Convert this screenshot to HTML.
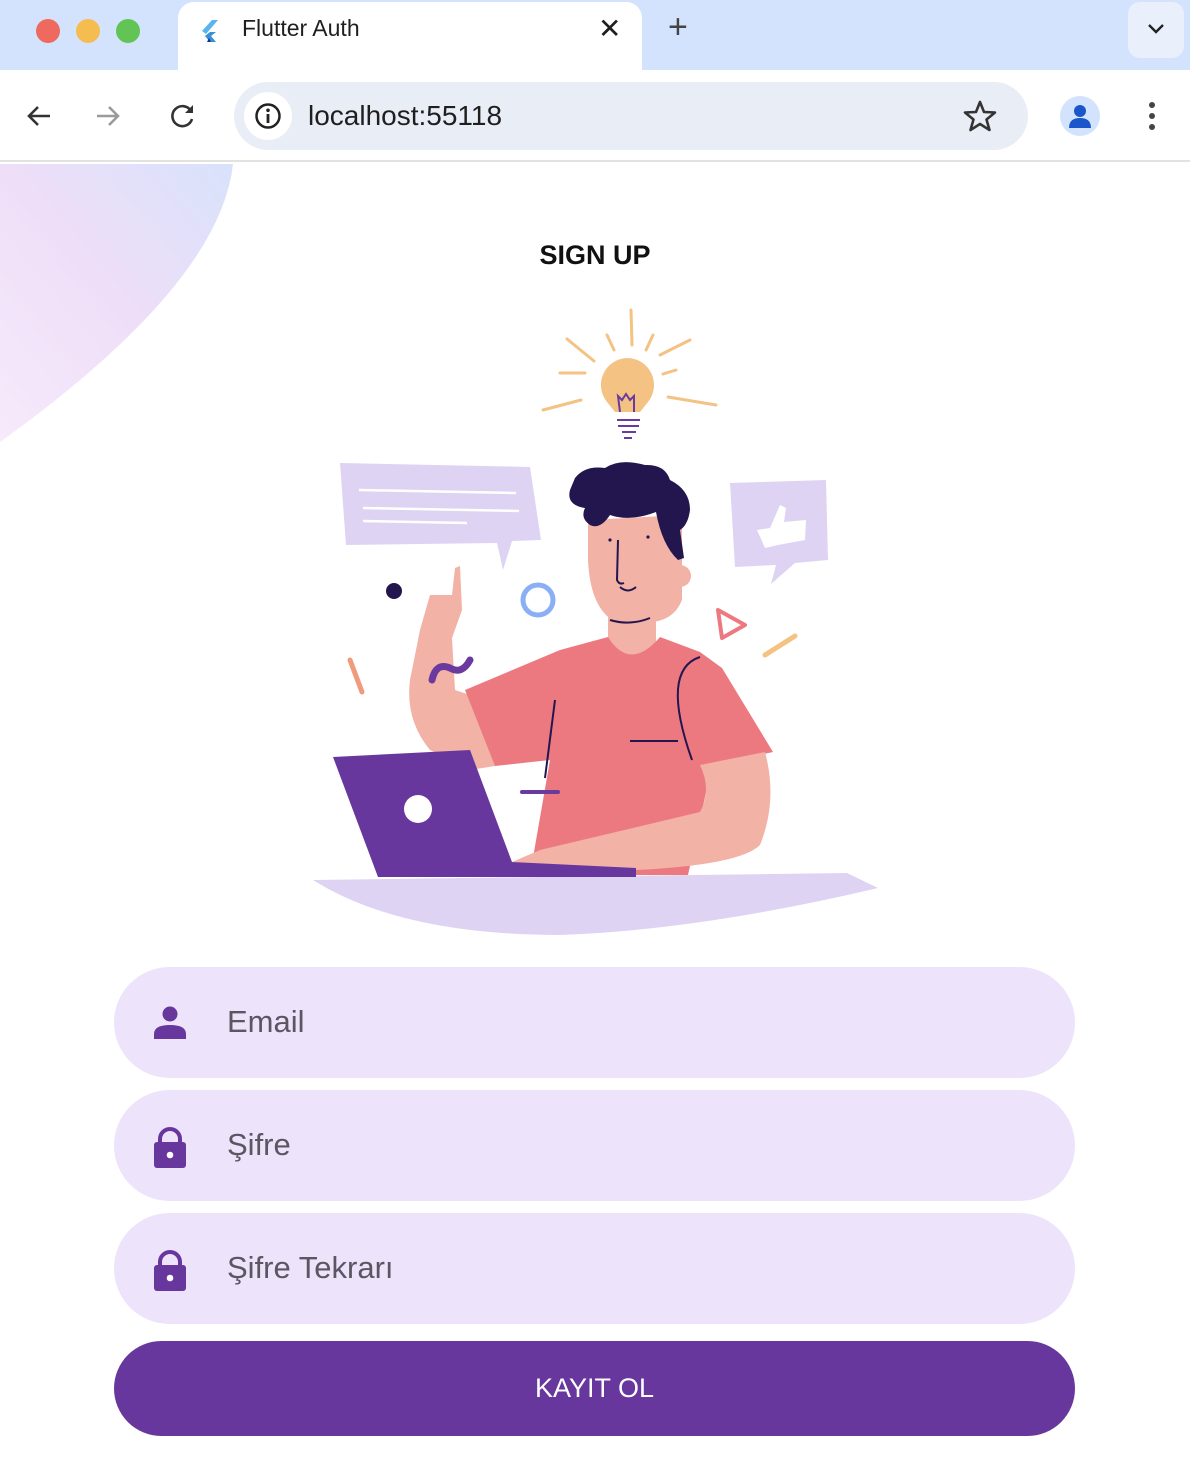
<!DOCTYPE html>
<html><head><meta charset="utf-8"><style>
*{margin:0;padding:0;box-sizing:border-box}
body{width:1190px;height:1474px;overflow:hidden;background:#fff;font-family:"Liberation Sans",sans-serif;position:relative}
.abs{position:absolute}
.field{position:absolute;left:114px;width:961px;height:111px;border-radius:56px;background:#ede3fb}
.field span{position:absolute;left:113px;top:37px;font-size:31px;color:#5b5661}
.field svg{position:absolute;left:38px;top:37px}
</style></head><body>
<!-- tab strip -->
<div class="abs" style="left:0;top:0;width:1190px;height:70px;background:#d3e3fd"></div>
<div class="abs" style="left:36px;top:19px;width:24px;height:24px;border-radius:50%;background:#ee6a5f"></div>
<div class="abs" style="left:76px;top:19px;width:24px;height:24px;border-radius:50%;background:#f5bd4f"></div>
<div class="abs" style="left:116px;top:19px;width:24px;height:24px;border-radius:50%;background:#61c454"></div>
<div class="abs" style="left:178px;top:2px;width:464px;height:70px;background:#fff;border-radius:16px 16px 0 0"></div>
<svg class="abs" style="left:198px;top:18px" width="24" height="26" viewBox="0 0 24 26"><path d="M14 2 L4 13 L8 16 L20 2Z" fill="#5ab4f1"/><path d="M12 14 L7 18 L12 24 L18 24 L13 18 L18 14Z" fill="#3a8fd6"/><path d="M11 20 L13 24 L9 24Z" fill="#0d3a7a"/></svg>
<div class="abs" style="left:242px;top:15px;font-size:23px;color:#1f1f1f">Flutter Auth</div>
<div class="abs" style="left:598px;top:12px;font-size:28px;color:#1f1f1f">✕</div>
<div class="abs" style="left:668px;top:8px;font-size:34px;color:#444;font-weight:300">+</div>
<div class="abs" style="left:1128px;top:2px;width:56px;height:56px;border-radius:12px;background:#e9effb"></div>
<svg class="abs" style="left:1146px;top:22px" width="20" height="14"><path d="M3 3 L10 10 L17 3" stroke="#222" stroke-width="2.4" fill="none"/></svg>
<!-- toolbar -->
<div class="abs" style="left:0;top:70px;width:1190px;height:92px;background:#fff;border-bottom:2px solid #e2e2e2"></div>
<svg class="abs" style="left:24px;top:102px" width="30" height="28"><path d="M26 14 H5 M14 5 L5 14 L14 23" stroke="#333" stroke-width="2.6" fill="none"/></svg>
<svg class="abs" style="left:94px;top:102px" width="30" height="28"><path d="M3 14 H24 M15 5 L24 14 L15 23" stroke="#9a9a9a" stroke-width="2.6" fill="none"/></svg>
<svg class="abs" style="left:168px;top:102px" width="30" height="28"><path d="M23 9 A10 10 0 1 0 24 17" stroke="#333" stroke-width="2.6" fill="none"/><path d="M25 3 V11 H17Z" fill="#333"/></svg>
<div class="abs" style="left:234px;top:82px;width:794px;height:68px;border-radius:34px;background:#e9eef6"></div>
<div class="abs" style="left:244px;top:92px;width:48px;height:48px;border-radius:50%;background:#fff"></div>
<svg class="abs" style="left:254px;top:102px" width="28" height="28"><circle cx="14" cy="14" r="11.5" stroke="#222" stroke-width="2.5" fill="none"/><rect x="12.6" y="12" width="2.8" height="9" fill="#222"/><circle cx="14" cy="8.3" r="1.8" fill="#222"/></svg>
<div class="abs" style="left:308px;top:100px;font-size:28px;color:#1f1f1f">localhost:55118</div>
<svg class="abs" style="left:962px;top:99px" width="36" height="34"><path d="M18 3 L22 13 L33 13.5 L24.5 20.5 L27.5 31 L18 25 L8.5 31 L11.5 20.5 L3 13.5 L14 13Z" stroke="#333" stroke-width="2.6" fill="none" stroke-linejoin="round"/></svg>
<div class="abs" style="left:1060px;top:96px;width:40px;height:40px;border-radius:50%;background:#d3e3fd"></div>
<svg class="abs" style="left:1064px;top:100px" width="32" height="32"><circle cx="16" cy="11" r="6" fill="#1a56c9"/><path d="M5 28 Q5 18 16 18 Q27 18 27 28Z" fill="#1a56c9"/></svg>
<div class="abs" style="left:1149px;top:102px;width:6px;height:6px;border-radius:50%;background:#444"></div>
<div class="abs" style="left:1149px;top:113px;width:6px;height:6px;border-radius:50%;background:#444"></div>
<div class="abs" style="left:1149px;top:124px;width:6px;height:6px;border-radius:50%;background:#444"></div>
<!-- corner blob -->
<svg class="abs" style="left:0;top:164px" width="240" height="280"><defs><linearGradient id="g" x1="0" y1="1" x2="1" y2="0"><stop offset="0" stop-color="#f6eafb"/><stop offset="0.5" stop-color="#efdef8"/><stop offset="1" stop-color="#d8e2fb"/></linearGradient></defs><path d="M0 0 H233 Q220 120 0 278Z" fill="url(#g)"/></svg>
<div class="abs" style="left:0;top:240px;width:1190px;text-align:center;font-size:27px;font-weight:bold;color:#111">SIGN UP</div>
<!-- illustration -->
<svg class="abs" style="left:0;top:0" width="1190" height="960">
<g stroke="#f4c283" stroke-width="3" stroke-linecap="round" fill="none">
<path d="M631 310 L632 345"/><path d="M607 335 L614 350"/><path d="M653 335 L646 350"/><path d="M567 339 L594 361"/><path d="M690 340 L660 355"/><path d="M560 373 L585 373"/><path d="M663 374 L676 370"/><path d="M543 410 L581 400"/><path d="M668 397 L716 405"/>
</g>
<path d="M627 358 A27 27 0 0 1 648 402 L640 412 L615 412 L607 402 A27 27 0 0 1 627 358Z" fill="#f4c283"/>
<g stroke="#6a3a9e" stroke-width="2" fill="none"><path d="M620 412 L618 396 L622 400 L626 394 L630 400 L634 396 L634 412"/><path d="M617 420 H640 M618 426 H639 M622 432 H636 M624 438 H632"/></g>
<path d="M340 463 L530 467 L541 540 L512 541 L503 570 L497 543 L346 545Z" fill="#ded3f3"/>
<g stroke="#fff" stroke-width="2.5"><path d="M359 490 L516 493"/><path d="M363 508 L519 511"/><path d="M363 521 L467 523"/></g>
<path d="M730 483 L826 480 L828 560 L795 563 L771 584 L776 565 L735 567Z" fill="#ded3f3"/>
<path d="M757 530 L770 528 L780 505 L786 508 L784 522 L806 520 L805 540 L778 545 L765 548Z" fill="#fff"/>
<circle cx="394" cy="591" r="8" fill="#23164f"/>
<circle cx="538" cy="600" r="15" stroke="#8aaff5" stroke-width="5" fill="none"/>
<path d="M350 660 L362 692" stroke="#f19a7c" stroke-width="5" stroke-linecap="round"/>
<path d="M718 610 L745 625 L722 638Z" stroke="#ec7980" stroke-width="4" fill="none" stroke-linejoin="round"/>
<path d="M765 655 L795 636" stroke="#f4c283" stroke-width="5" stroke-linecap="round"/>
<path d="M313 880 L847 873 L878 888 Q700 930 560 935 Q400 935 313 880Z" fill="#ded3f3"/>
<!-- raised arm -->
<path d="M430 595 L452 595 L455 568 L460 566 L462 610 L452 638 L455 690 L470 695 L495 766 L470 770 L430 750 Q405 720 410 680 L420 630Z" fill="#f2b2a6"/>
<!-- neck -->
<path d="M608 600 L656 600 L656 650 Q640 672 620 665 Q606 658 608 640Z" fill="#f2b2a6"/>
<!-- shirt -->
<path d="M465 690 L560 650 L608 637 Q630 672 660 637 L700 652 L722 668 L773 752 L712 765 L688 875 L530 875 L550 760 L495 766Z" fill="#ec7980"/>
<g stroke="#23164f" stroke-width="2" fill="none"><path d="M555 700 L545 778"/><path d="M630 741 L678 741"/><path d="M700 657 Q660 670 692 760"/></g>
<path d="M522 792 L558 792" stroke="#6a3a9e" stroke-width="4" stroke-linecap="round"/>
<!-- forearm -->
<path d="M700 765 L765 752 Q778 800 760 845 Q740 865 636 870 L512 862 L540 850 L700 812 Q712 790 700 765Z" fill="#f2b2a6"/>
<!-- face -->
<path d="M588 520 L682 515 L682 600 Q672 625 640 622 L612 620 Q590 605 588 560Z" fill="#f2b2a6"/>
<circle cx="680" cy="576" r="11" fill="#f2b2a6"/>
<g stroke="#23164f" stroke-width="2" fill="none"><path d="M618 540 L617 580 Q619 585 624 583"/><path d="M620 587 Q628 594 636 587"/><path d="M610 620 Q630 626 650 618"/></g>
<circle cx="610" cy="540" r="1.6" fill="#23164f"/><circle cx="648" cy="537" r="1.6" fill="#23164f"/>
<!-- hair -->
<path d="M575 478 Q585 465 605 468 Q620 458 645 465 Q665 464 670 480 Q690 490 690 510 Q688 525 680 530 L684 558 L678 560 Q662 545 656 512 Q630 522 610 515 Q600 530 590 525 Q580 518 585 508 Q566 505 570 490Z" fill="#23164f"/>
<!-- wiggle -->
<path d="M432 680 Q436 662 450 668 Q462 675 470 660" stroke="#6a3a9e" stroke-width="7" fill="none" stroke-linecap="round"/>
<!-- laptop -->
<path d="M333 757 L470 750 L512 862 L636 868 L636 877 L378 877Z" fill="#68379e"/>
<circle cx="418" cy="809" r="14" fill="#fff"/>
</svg>
<!-- form -->
<div class="field" style="top:967px"><svg width="36" height="36" viewBox="0 0 36 36"><circle cx="18" cy="10" r="7.5" fill="#67379e"/><path d="M2 35 V30 Q2 21 18 21 Q34 21 34 30 V35Z" fill="#67379e"/></svg><span>Email</span></div>
<div class="field" style="top:1090px"><svg width="36" height="42" viewBox="0 0 36 42"><path d="M8 16 V12 A10 10 0 0 1 28 12 V16" stroke="#67379e" stroke-width="4" fill="none"/><rect x="2" y="15" width="32" height="26" rx="3" fill="#67379e"/><circle cx="18" cy="28" r="3.3" fill="#fff"/></svg><span>Şifre</span></div>
<div class="field" style="top:1213px"><svg width="36" height="42" viewBox="0 0 36 42"><path d="M8 16 V12 A10 10 0 0 1 28 12 V16" stroke="#67379e" stroke-width="4" fill="none"/><rect x="2" y="15" width="32" height="26" rx="3" fill="#67379e"/><circle cx="18" cy="28" r="3.3" fill="#fff"/></svg><span>Şifre Tekrarı</span></div>
<div class="abs" style="left:114px;top:1341px;width:961px;height:95px;border-radius:48px;background:#67379e;color:#fff;font-size:27px;text-align:center;line-height:95px">KAYIT OL</div>
</body></html>
